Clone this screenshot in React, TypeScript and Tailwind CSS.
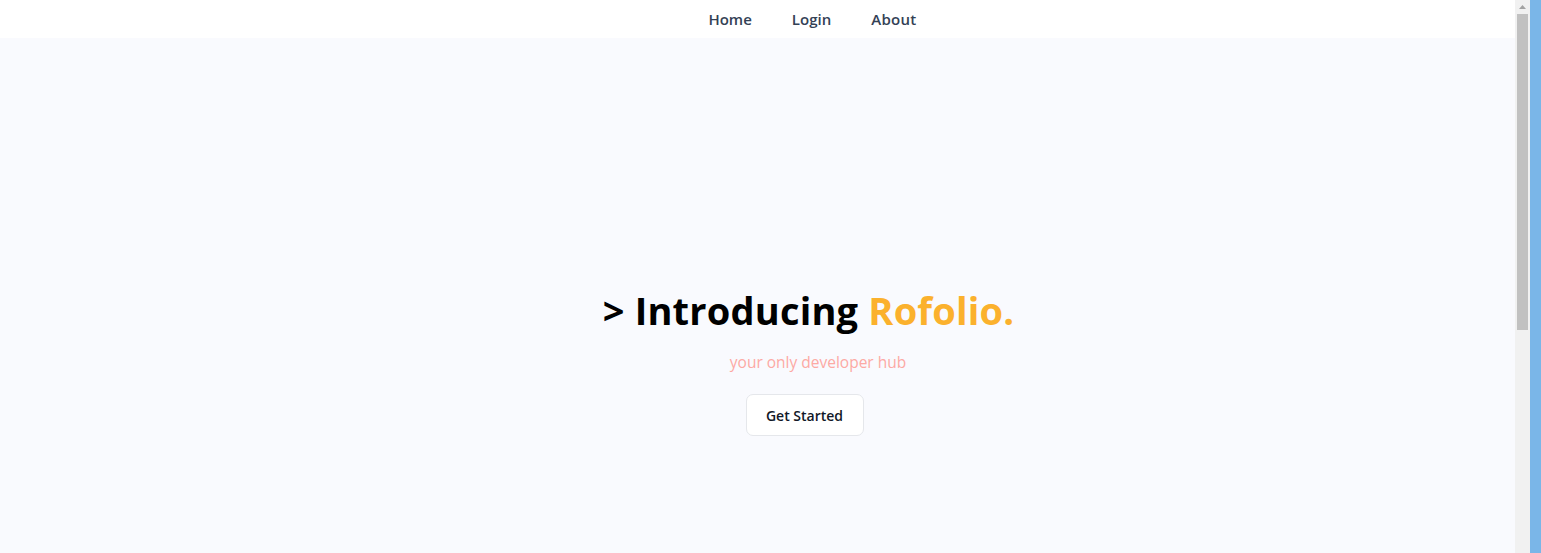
export default function App() {
  const font = { fontFamily: '"Open Sans", "Noto Sans", sans-serif' };
  return (
    <div className="flex h-[553px] w-full overflow-hidden bg-[#f9fafe]" style={font}>
      <div className="flex min-w-0 flex-1 flex-col">
        <header className="flex h-[38px] items-center justify-center bg-white pl-[110px]">
          <nav className="flex items-center gap-[40px] text-[15px] font-semibold text-[#334155]">
            <a>Home</a>
            <a>Login</a>
            <a className="tracking-[0.3px]">About</a>
          </nav>
        </header>
        <main className="flex flex-1 flex-col items-center pl-[102px] pt-[249px]">
          <h1 className="text-[38px] font-bold leading-[46px] tracking-[0.2px] text-black">
            &gt; Introducing <span className="text-[#fbb12d]">Rofolio.</span>
          </h1>
          <p className="ml-[19px] mt-[17px] text-[15.5px] leading-[24px] text-[#fda9a4]">your only developer hub</p>
          <button className="mr-[8px] mt-[20px] h-[42px] w-[118px] rounded-[7px] border border-[#e5e7eb] bg-white text-[14px] font-semibold text-[#111827]">
            Get Started
          </button>
        </main>
      </div>
      <div className="flex w-[15px] flex-col items-center bg-[#f1f1f1]">
        <svg width="15" height="14" viewBox="0 0 15 14"><path d="M4 9 L7.5 5 L11 9 Z" fill="#a3a3a3" /></svg>
        <div className="h-[316px] w-[11px] bg-[#c1c1c1]" />
      </div>
      <div className="w-[11px] bg-[#7ab6e8]" />
    </div>
  );
}
